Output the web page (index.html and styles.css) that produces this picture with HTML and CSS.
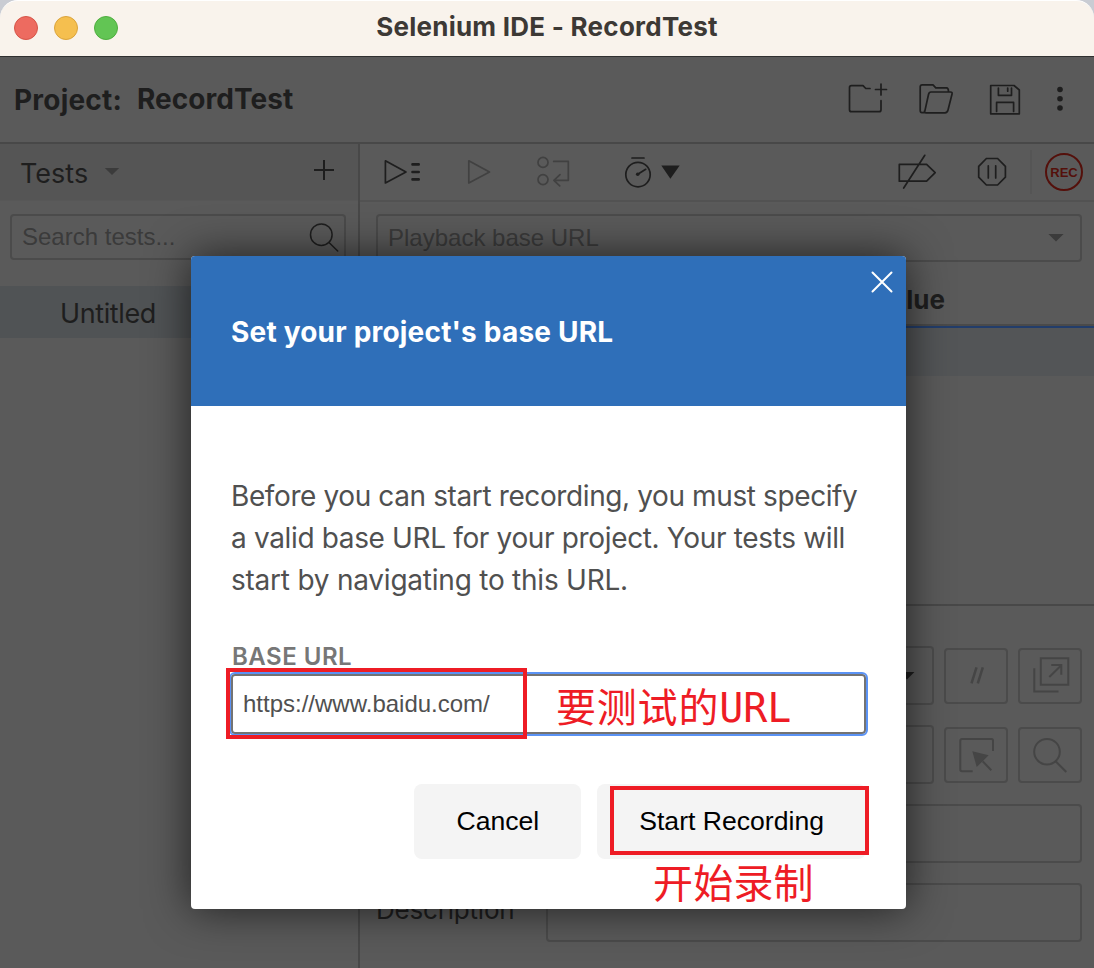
FILE: index.html
```html
<!DOCTYPE html>
<html lang="en">
<head>
<meta charset="utf-8">
<title>Selenium IDE - RecordTest</title>
<link rel="stylesheet" href="styles.css">
</head>
<body>
<div class="window">
  <header class="titlebar">
    <div class="lights"><span class="light red"></span><span class="light yellow"></span><span class="light green"></span></div>
    <span class="window-title">Selenium IDE - RecordTest</span>
  </header>

  <div class="project">
    <span class="project-label">Project:</span>
    <span class="project-name">RecordTest</span>
    <div class="project-actions">
      <svg width="44" height="40" viewBox="846 79 44 40"><path d="M870 88.5H865.8L863 85.7H851.5Q849.5 85.7 849.5 87.7V109.7Q849.5 111.7 851.5 111.7H879Q881 111.7 881 109.7V100.7M881 84V95M875.5 89.5H886.5"/></svg>
      <svg width="40" height="40" viewBox="916 79 40 40"><path d="M924.5 112.6H922Q920.2 112.6 920.2 110.5V87Q920.2 84.9 922.2 84.9H933L935.8 87.8H946.5Q948.5 87.8 948.5 91.5M924.5 112.6L928.5 94.5Q929 92 931 92H950.5Q952.6 92 952 94.3L948 110Q947.3 112.8 945 112.8H926Q924.3 112.8 924.5 111"/></svg>
      <svg width="42" height="40" viewBox="982 79 42 40"><path d="M990.7 85.5H1014L1019.3 90V113.8H990.7ZM998.4 88V95.3H1011.5V88M1007.7 88V91.2M996.6 111.5V102.4H1013.6V111.5"/></svg>
      <svg class="solid" width="20" height="40" viewBox="1050 79 20 40"><circle cx="1060" cy="89.5" r="2.8"/><circle cx="1060" cy="98.7" r="2.8"/><circle cx="1060" cy="108" r="2.8"/></svg>
    </div>
  </div>

  <main class="panes">
    <aside class="sidebar">
      <div class="tests-head">
        <span class="tests-title">Tests</span>
        <svg class="muted" width="16" height="10" viewBox="0 0 16 10"><path d="M.8 1H15.2L8 8Z"/></svg>
        <svg class="add" width="24" height="24" viewBox="0 0 24 24"><path d="M12 2V22M2 12H22"/></svg>
      </div>
      <div class="search">
        <span>Search tests...</span>
        <svg class="thin" width="32" height="32" viewBox="308 221 32 32"><circle cx="321.3" cy="234.7" r="10.8"/><path d="M329 242.5L337.7 251"/></svg>
      </div>
      <div class="test-item">Untitled</div>
    </aside>

    <section class="editor">
      <div class="toolbar">
        <svg width="40" height="40" viewBox="382 152 40 40"><path d="M385.4 160.8V183L406 172Z"/><path class="bold" d="M412.5 164.4H418.7M412.5 172H418.7M412.5 179.4H418.7"/></svg>
        <svg class="dim" width="26" height="40" viewBox="466 152 26 40"><path d="M468.8 160.8V183L489.5 172Z"/></svg>
        <svg class="dim" width="44" height="40" viewBox="536 152 44 40"><circle cx="543" cy="162.4" r="5"/><circle cx="543" cy="179.6" r="5"/><path d="M553.7 161.4H568.3V180.3H554M560 174.6L553.9 180.3L559.7 185.8"/></svg>
        <svg width="56" height="40" viewBox="624 152 56 40"><circle cx="638" cy="174.6" r="12.2"/><path d="M632 158H644M637.8 174.2L645.7 169.3"/><circle class="fill" cx="637.7" cy="174.2" r="1.8"/><path class="fill" d="M661.3 165.4H679.7L670.4 178.8Z"/></svg>
        <div class="toolbar-right">
          <svg width="42" height="40" viewBox="896 152 42 40"><path d="M899.3 164.4H926.6L935.2 172.7L926.6 181.2H899.3ZM924.8 155.3L903.7 188"/></svg>
          <svg class="pause" width="32" height="40" viewBox="976 152 32 40"><path d="M986.4 158.5H997.6L1005.4 166.3V177.2L997.6 185H986.4L978.7 177.2V166.3ZM988.3 165.8V178M995.7 165.8V178"/></svg>
          <span class="divider"></span>
          <span class="rec">REC</span>
        </div>
      </div>
      <div class="base-url">
        <span>Playback base URL</span>
        <svg class="muted" width="16" height="10" viewBox="0 0 16 10"><path d="M.4 1H15.6L8 8.5Z"/></svg>
      </div>
      <div class="columns"><span>Value</span></div>
      <div class="command-row"></div>
      <div class="form">
        <div class="form-row">
          <div class="field select"><svg class="solid" width="16" height="10" viewBox="0 0 16 10"><path d="M.6 1H15.4L8 8.5Z"/></svg></div>
          <div class="tool"><svg width="60" height="52" viewBox="946 650 60 52"><path class="slashes" d="M976.5 667.3L971.5 683.3M982.8 667.3L977.8 683.3"/></svg></div>
          <div class="tool"><svg width="60" height="52" viewBox="1020 650 60 52"><path d="M1040.8 658.2H1068.3V684.8H1040.8ZM1034.3 668.3V691.5H1058.5M1049.3 677L1061.3 665.3M1051.3 665H1061.3V674.7"/></svg></div>
        </div>
        <div class="form-row">
          <div class="field"></div>
          <div class="tool"><svg width="60" height="52" viewBox="946 729 60 52"><path d="M993 751V740.5Q993 739 991.5 739H962Q960.3 739 960.3 740.8V769.5Q960.3 771.2 962 771.2H972.7M982.7 761.3L991.3 770.3"/><path class="fill" d="M972.3 751.3L988.7 755.3L976.7 767Z"/></svg></div>
          <div class="tool"><svg width="60" height="52" viewBox="1020 729 60 52"><circle cx="1047" cy="751.7" r="12.8"/><path d="M1055.6 761.3L1066.3 772"/></svg></div>
        </div>
        <div class="form-row"><div class="field"></div></div>
        <div class="form-row"><span class="form-label">Description</span><div class="field"></div></div>
      </div>
    </section>
  </main>

  <div class="dialog" role="dialog">
    <div class="dialog-head">
      <h1>Set your project's base URL</h1>
      <svg class="close" width="24" height="24" viewBox="0 0 24 24"><path d="M2.5 2.5L21.5 21.5M21.5 2.5L2.5 21.5"/></svg>
    </div>
    <div class="dialog-body">
      <p><span class="l1">Before you can start recording, you must specify</span><br><span class="l2">a valid base URL for your project. Your tests will</span><br><span class="l3">start by navigating to this URL.</span></p>
      <div class="label">BASE URL</div>
      <div class="input">https://www.baidu.com/</div>
      <div class="buttons"><span class="button">Cancel</span><span class="button">Start Recording</span></div>
    </div>
  </div>

  <div class="mark mark-url"></div>
  <div class="note note-url"><span class="han">要测试的</span>URL</div>
  <div class="mark mark-start"></div>
  <div class="note note-start">开始录制</div>
</div>
</body>
</html>
```
FILE: styles.css
```css
* { box-sizing: border-box; }
body { margin: 0; background: #c9ccd3; font-family: Inter, "Liberation Sans", sans-serif; color: #1e1e1e; }
svg { display: block; flex: none; fill: none; stroke: #1e1e1e; stroke-width: 1.7; stroke-linejoin: round; stroke-linecap: round; }
.window { position: relative; width: 1094px; height: 968px; overflow: hidden; display: flex; flex-direction: column; white-space: nowrap; }

.titlebar { height: 57px; flex: none; display: flex; align-items: center; justify-content: center; position: relative; background: #f9f3ec; border-bottom: 1px solid #303030; border-top: 1px solid #fff; border-radius: 18px 18px 0 0; }
.lights { position: absolute; left: 14px; top: 15px; display: flex; gap: 16px; }
.light { width: 24px; height: 24px; border-radius: 50%; border: 1px solid; }
.red { background: #ed6b60; border-color: #d65548; }
.yellow { background: #f5bf4f; border-color: #dba43c; }
.green { background: #62c554; border-color: #4fae3f; }
.window-title { font-size: 26px; font-weight: 700; color: #3d3935; letter-spacing: .25px; padding-bottom: 4px; }

.project { height: 87px; flex: none; display: flex; align-items: center; padding: 0 24px 2px 14px; background: #5a5a5a; border-bottom: 2px solid #484848; font-size: 28px; font-weight: 700; }
.project-label { letter-spacing: .2px; padding-top: 2px; }
.project-name { margin-left: 15px; letter-spacing: .05px; }
.project-actions { margin-left: auto; display: flex; gap: 26px; }
.solid, .fill { fill: #1e1e1e; stroke: none; }
.muted { fill: #3b3b3b; stroke: none; }

.panes { flex: 1; display: flex; min-height: 0; background: #5a5a5a; }
.sidebar { width: 360px; flex: none; border-right: 2px solid #484848; }
.tests-head { height: 57px; display: flex; align-items: center; background: #555; padding: 0 22px 0 20px; border-bottom: 1px solid #575757; }
.tests-title { font-size: 27px; margin-right: 16px; padding-top: 2px; }
.add { margin: 0 0 4px auto; stroke-linecap: butt; stroke-width: 2; }
.search { margin: 13px 12px 0 10px; height: 46px; border: 2px solid #4b4b4b; border-radius: 4px; padding: 0 4px 0 10px; display: flex; align-items: center; justify-content: space-between; font: 24px "Liberation Sans", sans-serif; color: #3b3b3b; }
.thin { stroke-width: 1.5; }
.test-item { margin-top: 26px; height: 52px; line-height: 55px; padding-left: 60px; font-size: 27px; letter-spacing: -.4px; background: #505355; }

.editor { flex: 1; display: flex; flex-direction: column; min-width: 0; }
.toolbar { height: 58px; flex: none; display: flex; align-items: center; gap: 44px; padding: 0 11px 0 22px; border-bottom: 2px solid #525252; }
.dim { stroke: #414141; }
.bold { stroke-width: 2.6; }
.pause { stroke-linejoin: miter; }
.toolbar-right { margin-left: auto; display: flex; align-items: center; }
.divider { width: 2px; height: 44px; margin: 0 13px 0 22px; background: #555; }
.toolbar-right svg + svg { margin-left: 38px; }
.rec { width: 38px; height: 38px; border: 2px solid #54100b; border-radius: 50%; display: flex; align-items: center; justify-content: center; color: #54100b; font: bold 13px "Liberation Sans", sans-serif; }
.base-url { height: 48px; flex: none; margin: 12px 12px 0 16px; border: 2px solid #4b4b4b; border-radius: 4px; display: flex; align-items: center; justify-content: space-between; padding: 0 16px 0 10px; font: 24px "Liberation Sans", sans-serif; color: #3b3b3b; }
.columns { height: 64px; flex: none; border-bottom: 2px solid #4a4a4a; padding: 20px 149px 0 0; text-align: right; font-size: 26px; line-height: 36px; font-weight: 700; }
.command-row { height: 50px; flex: none; background: #535557; border-top: 2px solid #223d6b; }
.form { margin-top: 228px; border-top: 2px solid #484848; padding: 40px 12px 0 16px; display: flex; flex-direction: column; gap: 20px; }
.form-row { height: 59px; display: flex; align-items: center; justify-content: flex-end; gap: 10px; padding-left: 170px; }
.field { flex: 1; height: 59px; border: 2px solid #4b4b4b; border-radius: 4px; }
.select { display: flex; align-items: center; justify-content: flex-end; padding-right: 17px; }
.tool { width: 64px; height: 56px; border: 2px solid #4b4b4b; border-radius: 4px; }
.tool svg { stroke: #454545; stroke-width: 2; stroke-linecap: butt; stroke-linejoin: miter; }
.tool .slashes { stroke-width: 2.5; }
.tool .fill { fill: #454545; }
.form-label { width: 170px; margin: 0 -10px 0 -170px; padding-bottom: 7px; font-size: 26px; letter-spacing: -.2px; }

.dialog { position: absolute; left: 191px; top: 256px; width: 715px; height: 653px; border-radius: 4px; overflow: hidden; background: #fff; box-shadow: 0 0 44px rgba(0, 0, 0, .65); }
.dialog-head { height: 150px; display: flex; align-items: center; padding: 0 12px 0 40px; background: #2f6fb9; }
h1 { margin: 0; flex: 1; color: #fff; font-size: 28px; font-weight: 700; letter-spacing: .2px; padding-top: 1px; }
.close { align-self: flex-start; margin-top: 14px; stroke: #fff; stroke-width: 2; }
.dialog-body { padding: 69px 40px 0 40px; }
p { margin: 0; font-size: 28px; line-height: 42px; color: #505050; }
.l1 { letter-spacing: -.39px; }
.l2 { letter-spacing: -.35px; }
.l3 { letter-spacing: -.23px; }
.label { margin: 41px 0 0 1px; height: 30px; line-height: 30px; font-size: 24px; font-weight: 600; letter-spacing: .5px; color: #777; }
.input { margin-top: 2px; height: 60px; border: 2px solid #737373; border-radius: 4px; outline: 2px solid #5b93f5; padding-left: 10px; line-height: 56px; font-family: "Liberation Sans", sans-serif; font-size: 24px; color: #505050; }
.buttons { margin-top: 50px; display: flex; justify-content: flex-end; gap: 16px; }
.button { height: 75px; line-height: 74px; padding: 0 42px; border-radius: 8px; background: #f4f4f4; color: #000; font-family: "Liberation Sans", sans-serif; font-size: 26.6px; }

.mark { position: absolute; border: 4px solid #ee1c25; }
.mark-url { left: 226px; top: 668px; width: 301px; height: 71px; }
.mark-start { left: 610px; top: 786px; width: 259px; height: 69px; }
.note { position: absolute; font: 40px/48px "DejaVu Sans Mono", "Noto Sans CJK SC", sans-serif; color: #ee1c25; }
.han { letter-spacing: .8px; }
.note-url { left: 556px; top: 684px; }
.note-start { left: 653px; top: 860px; letter-spacing: .2px; }
```
